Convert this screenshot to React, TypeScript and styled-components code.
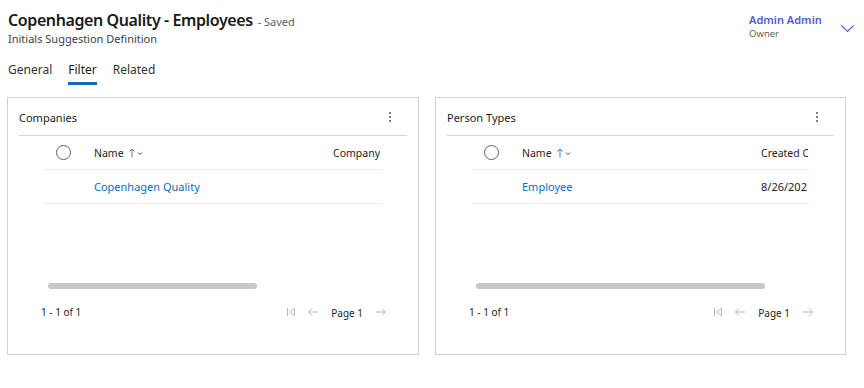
import React from "react";
import styled, { createGlobalStyle } from "styled-components";

const Global = createGlobalStyle`
  html, body { margin: 0; padding: 0; background: #ffffff; }
  body { font-family: "Segoe UI", "Noto Sans", "Open Sans", sans-serif; color: #242424; }
  * { box-sizing: border-box; }
`;

const Page = styled.div`
  width: 864px;
  height: 388px;
  overflow: hidden;
  background: #fff;
`;

const Header = styled.header`
  display: flex;
  justify-content: space-between;
  align-items: flex-start;
  padding: 8px 10px 0 8px;
  height: 58px;
`;

const TitleBlock = styled.div`
  display: flex;
  flex-direction: column;
`;

const TitleRow = styled.div`
  display: flex;
  align-items: baseline;
  gap: 5px;
`;

const Title = styled.h1`
  margin: 0;
  font-size: 16px;
  font-weight: 600;
  line-height: 24px;
  color: #1a1a1a;
  letter-spacing: -0.4px;
`;

const Saved = styled.span`
  font-size: 11px;
  color: #616161;
`;

const Subtitle = styled.div`
  font-size: 11px;
  line-height: 14px;
  color: #424242;
`;

const UserBlock = styled.div`
  display: flex;
  align-items: flex-start;
  gap: 11px;
  padding-top: 4px;
`;

const UserText = styled.div`
  display: flex;
  flex-direction: column;
  width: 81px;
`;

const UserName = styled.span`
  font-size: 11px;
  font-weight: 600;
  line-height: 15px;
  color: #4f5bd5;
`;

const UserRole = styled.span`
  font-size: 9.5px;
  line-height: 14px;
  color: #616161;
`;

const Chevron = styled.svg`
  margin-top: 13px;
`;

const Tabs = styled.nav`
  display: flex;
  gap: 16px;
  padding-left: 8px;
  height: 39px;
`;

const Tab = styled.div<{ $active?: boolean }>`
  font-size: 12px;
  line-height: 24px;
  color: ${(p) => (p.$active ? "#1a1a1a" : "#333")};
  height: 27px;
  border-bottom: 3px solid ${(p) => (p.$active ? "#0f6cbd" : "transparent")};
`;

const Cards = styled.div`
  display: grid;
  grid-template-columns: 412px 411px;
  column-gap: 16px;
  padding-left: 7px;
`;

const Card = styled.section`
  border: 1px solid #d1d1d1;
  height: 258px;
  padding: 0 11px;
  display: flex;
  flex-direction: column;
  background: #fff;
`;

const CardHeader = styled.div`
  height: 38px;
  display: flex;
  align-items: center;
  justify-content: space-between;
  border-bottom: 1px solid #d6d6d6;
  padding: 1px 15px 0 0;
`;

const CardTitle = styled.span`
  font-size: 11px;
  color: #242424;
`;

const Grid = styled.div`
  margin: 0 25px;
  display: flex;
  flex-direction: column;
  flex: 1;
`;

const Row = styled.div<{ $header?: boolean }>`
  display: grid;
  grid-template-columns: 38px 251px 47px;
  height: 34px;
  align-items: center;
  border-bottom: 1px solid #ececec;
  font-size: ${(p) => (p.$header ? "10.5px" : "11px")};
  color: #242424;
`;

const CheckCell = styled.div`
  display: flex;
  justify-content: center;
`;

const Circle = styled.span`
  width: 15px;
  height: 15px;
  border-radius: 50%;
  border: 1px solid #616161;
`;

const NameCell = styled.div`
  padding-left: 12px;
  display: flex;
  align-items: center;
  gap: 4px;
`;

const Clip = styled.div`
  overflow: hidden;
  white-space: nowrap;
`;

const LinkText = styled.span`
  color: #0f6cbd;
`;

const Spacer = styled.div`
  flex: 1;
`;

const ScrollTrack = styled.div`
  height: 6px;
  margin: 0 0 0 4px;
`;

const Thumb = styled.div`
  height: 6px;
  border-radius: 3px;
  background: #c8c8c8;
`;

const Footer = styled.div`
  display: flex;
  justify-content: space-between;
  align-items: center;
  height: 30px;
  margin: 8px 0 27px -3px;
  font-size: 10px;
  color: #242424;
`;

const Pager = styled.div`
  display: flex;
  align-items: center;
  gap: 11px;
  margin-right: -5px;
`;

const PageLabel = styled.span`
  font-size: 10px;
  margin: 2px 1px 0;
`;

const MoreIcon = () => (
  <svg width="4" height="12" viewBox="0 0 4 12">
    <circle cx="2" cy="2" r="0.9" fill="#444" />
    <circle cx="2" cy="6" r="0.9" fill="#444" />
    <circle cx="2" cy="10" r="0.9" fill="#444" />
  </svg>
);

const SortIcons = () => (
  <svg width="16" height="10" viewBox="0 0 16 10">
    <path d="M4 9.5V1 M1.5 3.5 L4 1 L6.5 3.5" fill="none" stroke="#4a7fd0" strokeWidth="1" />
    <path d="M10 4.5 L12 6.5 L14 4.5" fill="none" stroke="#444" strokeWidth="1" />
  </svg>
);

const FirstIcon = () => (
  <svg width="10" height="10" viewBox="0 0 10 10">
    <path d="M1.5 1v8 M8.5 1.5 L4 5 L8.5 8.5 Z" fill="none" stroke="#b8b8b8" strokeWidth="1" />
  </svg>
);

const ArrowLeft = () => (
  <svg width="12" height="10" viewBox="0 0 12 10">
    <path d="M11 5H1.5 M5 1.5 L1.5 5 L5 8.5" fill="none" stroke="#b8b8b8" strokeWidth="1" />
  </svg>
);

const ArrowRight = () => (
  <svg width="12" height="10" viewBox="0 0 12 10">
    <path d="M1 5H10.5 M7 1.5 L10.5 5 L7 8.5" fill="none" stroke="#b8b8b8" strokeWidth="1" />
  </svg>
);

type CardProps = {
  title: string;
  col2: string;
  name: string;
  val2: string;
  thumb: number;
};

const SubgridCard = ({ title, col2, name, val2, thumb }: CardProps) => (
  <Card>
    <CardHeader>
      <CardTitle>{title}</CardTitle>
      <MoreIcon />
    </CardHeader>
    <Grid>
      <Row $header>
        <CheckCell>
          <Circle />
        </CheckCell>
        <NameCell>
          Name <SortIcons />
        </NameCell>
        <Clip>{col2}</Clip>
      </Row>
      <Row>
        <div />
        <NameCell>
          <LinkText>{name}</LinkText>
        </NameCell>
        <Clip>{val2}</Clip>
      </Row>
      <Spacer />
      <ScrollTrack>
        <Thumb style={{ width: thumb }} />
      </ScrollTrack>
      <Footer>
        <span>1 - 1 of 1</span>
        <Pager>
          <FirstIcon />
          <ArrowLeft />
          <PageLabel>Page 1</PageLabel>
          <ArrowRight />
        </Pager>
      </Footer>
    </Grid>
  </Card>
);

export default function App() {
  return (
    <Page>
      <Global />
      <Header>
        <TitleBlock>
          <TitleRow>
            <Title>Copenhagen Quality - Employees</Title>
            <Saved>- Saved</Saved>
          </TitleRow>
          <Subtitle>Initials Suggestion Definition</Subtitle>
        </TitleBlock>
        <UserBlock>
          <UserText>
            <UserName>Admin Admin</UserName>
            <UserRole>Owner</UserRole>
          </UserText>
          <Chevron width="13" height="7" viewBox="0 0 13 7">
            <path d="M0.5 0.5 L6.5 6.5 L12.5 0.5" fill="none" stroke="#4f5bd5" strokeWidth="1.1" />
          </Chevron>
        </UserBlock>
      </Header>
      <Tabs>
        <Tab>General</Tab>
        <Tab $active>Filter</Tab>
        <Tab>Related</Tab>
      </Tabs>
      <Cards>
        <SubgridCard title="Companies" col2="Company ID" name="Copenhagen Quality" val2="" thumb={209} />
        <SubgridCard title="Person Types" col2="Created On" name="Employee" val2="8/26/2021" thumb={289} />
      </Cards>
    </Page>
  );
}
